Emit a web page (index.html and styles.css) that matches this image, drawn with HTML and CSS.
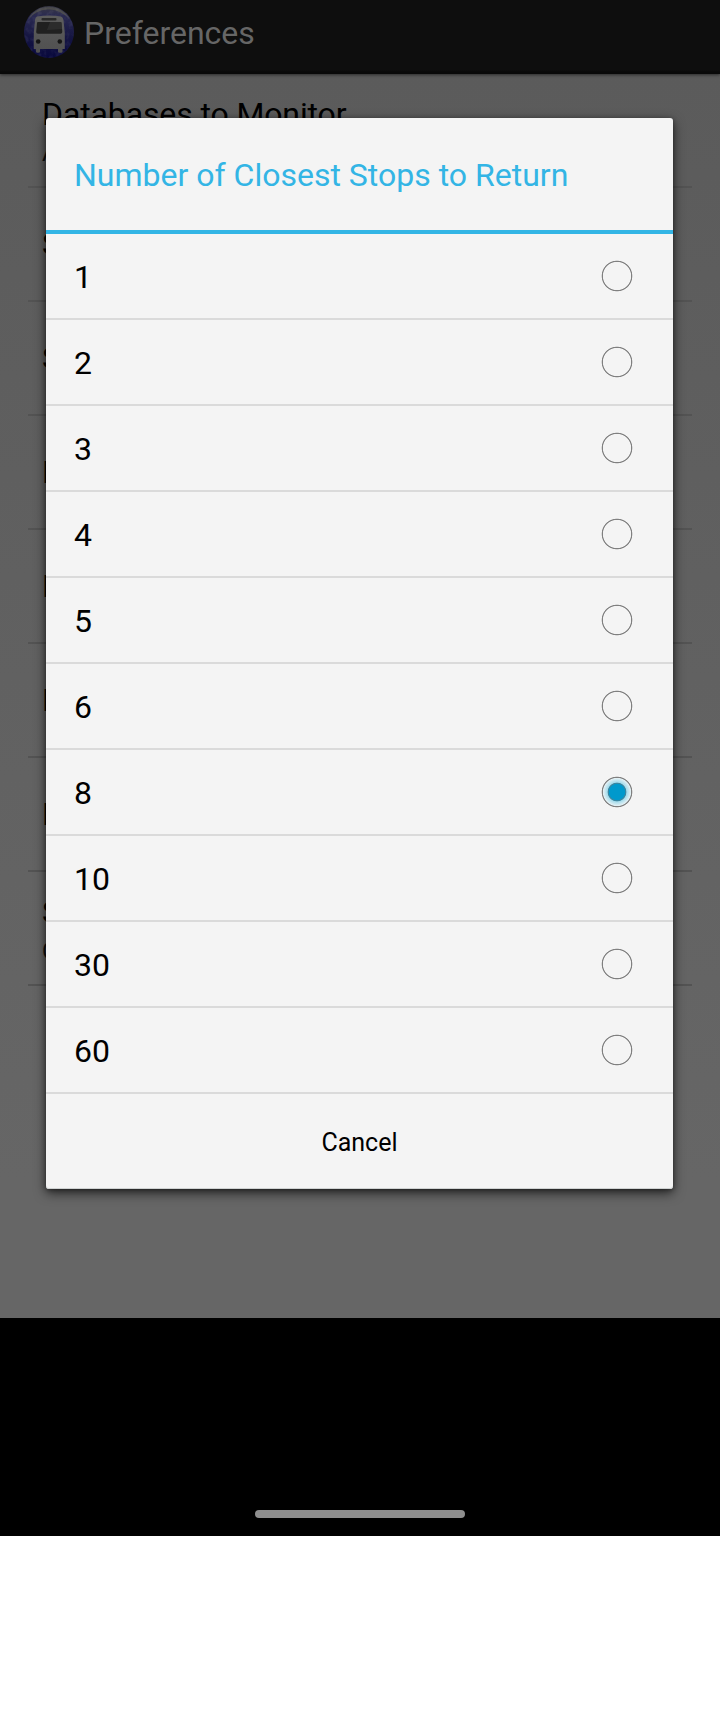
FILE: index.html
```html
<!DOCTYPE html>
<html lang="en">
<head>
<meta charset="utf-8">
<title>Preferences</title>
<link rel="stylesheet" href="styles.css">
</head>
<body>
<div class="device">
  <div class="screen">
    <div class="app">
      <header class="bar">
        <svg class="logo" width="50" height="52" viewBox="0 0 50 52">
          <defs>
            <linearGradient id="disc" x1="0" y1="0" x2="0" y2="1">
              <stop offset="0" stop-color="#373743"/><stop offset=".2" stop-color="#292951"/>
              <stop offset=".6" stop-color="#151542"/><stop offset="1" stop-color="#08083d"/>
            </linearGradient>
            <linearGradient id="body" x1="0" y1="0" x2="0" y2="1">
              <stop offset="0" stop-color="#5d5d5d"/><stop offset="1" stop-color="#505050"/>
            </linearGradient>
            <filter id="grain" x="0" y="0" width="1" height="1">
              <feTurbulence type="fractalNoise" baseFrequency=".22" numOctaves="2" seed="4"/>
              <feColorMatrix values="0 0 0 0 .3  0 0 0 0 .3  0 0 0 0 .4  1.6 0 0 0 -.66"/>
              <feComposite in2="SourceGraphic" operator="in"/>
            </filter>
          </defs>
          <ellipse cx="25" cy="26" rx="25" ry="26" fill="url(#disc)"/>
          <path d="M4 14Q11 1 25 1T46 14Q38 4 25 3.500T4 14Z" fill="#4a4a4c"/>
          <ellipse cx="25" cy="26" rx="25" ry="26" filter="url(#grain)" opacity=".2"/>
          <path d="M13 10.500Q25 8.500 37 10.500Q39 11 39.500 14L40.800 27V43H38.500V45.500Q38.500 46.800 37 46.800H35.500Q34 46.800 34 45.500V43H16V45.500Q16 46.800 14.500 46.800H13.500Q12 46.800 12 45.500V43H9.800V27L11 14Q11.300 11 13 10.500Z" fill="url(#body)"/>
          <rect x="17.500" y="12" width="15" height="2.500" rx="1" fill="#292929"/>
          <path d="M14 16H36.500Q37.500 16 37.600 17L38.300 26Q38.300 27.800 36.500 27.800H14Q12 27.800 12.200 26L13 17Q13.100 16 14 16Z" fill="#202020"/>
          <path d="M26 16H36.500Q37.500 16 37.600 17L38 23L23 24Z" fill="#353535" opacity=".6"/>
          <circle cx="14.200" cy="35.500" r="2.300" fill="#151515"/>
          <circle cx="35.800" cy="35.500" r="2.300" fill="#151515"/>
        </svg>
        <h1 class="bar-title">Preferences</h1>
      </header>
      <ul class="prefs">
        <li class="pref noted"><span class="pref-title">Databases to Monitor</span><span class="pref-note">A</span></li>
        <li class="pref"><span class="pref-title">S</span></li>
        <li class="pref"><span class="pref-title">S</span></li>
        <li class="pref"><span class="pref-title">E</span></li>
        <li class="pref"><span class="pref-title">E</span></li>
        <li class="pref"><span class="pref-title">E</span></li>
        <li class="pref"><span class="pref-title">E</span></li>
        <li class="pref noted"><span class="pref-title">S</span><span class="pref-note">C</span></li>
      </ul>
    </div>
    <section class="dialog">
      <h2 class="dialog-title">Number of Closest Stops to Return</h2>
      <ul class="options">
        <li class="option">1<i class="radio"></i></li>
        <li class="option">2<i class="radio"></i></li>
        <li class="option">3<i class="radio"></i></li>
        <li class="option">4<i class="radio"></i></li>
        <li class="option">5<i class="radio"></i></li>
        <li class="option">6<i class="radio"></i></li>
        <li class="option">8<i class="radio on"></i></li>
        <li class="option">10<i class="radio"></i></li>
        <li class="option">30<i class="radio"></i></li>
        <li class="option">60<i class="radio"></i></li>
      </ul>
      <div class="cancel">Cancel</div>
    </section>
  </div>
  <div class="nav"><div class="handle"></div></div>
</div>
</body>
</html>
```
FILE: styles.css
```css
* { box-sizing: border-box; }
body { margin: 0; background: #fff; font-family: Roboto, sans-serif; color: #000; }
h1, h2, ul { margin: 0; padding: 0; font-weight: 400; list-style: none; }
.device { width: 720px; height: 1536px; background: #000; }
.screen { display: grid; height: 1318px; }
.app, .dialog { grid-area: 1 / 1; }
.app { background: linear-gradient(#5b5b5b 74px, #666 1180px); }
.bar {
  display: flex; height: 74px; padding: 6px 0 0 24px; align-items: flex-start;
  background: linear-gradient(#0e0e0e 70px, #090909 72px);
  box-shadow: 0 1px 3px rgba(0, 0, 0, .55);
}
.logo { display: block; flex: none; }
.bar-title { margin-left: 10px; padding-top: 8px; font-size: 32px; line-height: 38px; color: #666; }
.prefs { padding: 0 28px; }
.pref {
  display: flex; flex-direction: column; justify-content: center;
  height: 114px; padding-left: 14px; border-bottom: 2px solid #535353;
}
.noted { padding-top: 4px; }
.pref-title { font-size: 32px; line-height: 38px; letter-spacing: -.12px; }
.pref-note { margin-top: 4px; font-size: 24px; line-height: 32px; color: #111; }
.dialog {
  width: 627px; height: 1071px; margin: 118px 0 0 46px;
  background: #f4f4f4; border-radius: 3px;
  box-shadow: 0 4px 12px rgba(0, 0, 0, .65), 0 1px 4px rgba(0, 0, 0, .35), inset 0 -1px #cfd2d2;
}
.dialog-title {
  height: 116px; padding: 38px 28px 0; border-bottom: 4px solid #33b5e5;
  font-size: 32px; line-height: 38px; color: #33b5e5; white-space: nowrap;
}
.option {
  display: flex; align-items: center; justify-content: space-between;
  height: 86px; padding: 1px 40px 0 28px; border-bottom: 2px solid #dadada;
  font-size: 32px;
}
.radio {
  width: 32px; height: 32px; margin-top: -1px;
  background: radial-gradient(circle, transparent 13.700px, #808080 14.500px 14.900px, transparent 15.700px);
}
.on {
  background: radial-gradient(circle, #0099cc 0 7.800px, #3987a2 8.300px 9px, #a5dcec 9.700px, #e3f0f4 13.700px, #808080 14.500px 14.900px, transparent 15.700px);
}
.cancel { padding-top: 34px; font-size: 25px; line-height: 30px; text-align: center; }
.nav { display: flex; justify-content: center; align-items: flex-end; height: 218px; padding-bottom: 18px; }
.handle { width: 210px; height: 8px; border-radius: 4px; background: #8e8e8e; }
```
